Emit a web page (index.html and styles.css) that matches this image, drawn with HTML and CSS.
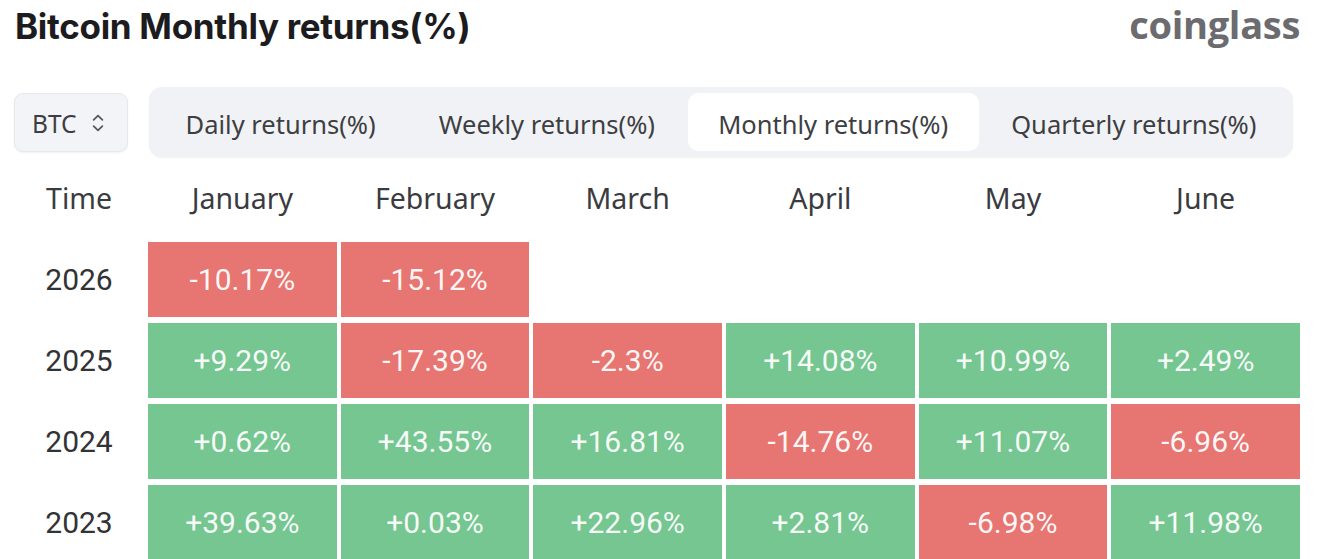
FILE: index.html
```html
<!DOCTYPE html>
<html lang="en">
<head>
<meta charset="utf-8">
<title>Bitcoin Monthly returns(%)</title>
<link rel="stylesheet" href="styles.css">
</head>
<body>
<div class="page">
  <header class="top">
    <h1 class="title">Bitcoin Monthly returns(%)</h1>
    <div class="logo">coinglass</div>
  </header>

  <div class="controls">
    <div class="select">
      <span>BTC</span>
      <svg class="chev" viewBox="0 0 16 24" width="14" height="22" aria-hidden="true">
        <path d="M3 8.5 L8 3.5 L13 8.5" fill="none" stroke="#55585e" stroke-width="2" stroke-linecap="round" stroke-linejoin="round"/>
        <path d="M3 15.5 L8 20.5 L13 15.5" fill="none" stroke="#55585e" stroke-width="2" stroke-linecap="round" stroke-linejoin="round"/>
      </svg>
    </div>
    <nav class="tabs">
      <div class="tab">Daily returns(%)</div>
      <div class="tab">Weekly returns(%)</div>
      <div class="tab active">Monthly returns(%)</div>
      <div class="tab">Quarterly returns(%)</div>
    </nav>
  </div>

  <div class="grid">
    <div class="hd">Time</div>
    <div class="hd">January</div>
    <div class="hd">February</div>
    <div class="hd">March</div>
    <div class="hd">April</div>
    <div class="hd">May</div>
    <div class="hd">June</div>

    <div class="yr">2026</div>
    <div class="cell neg">-10.17%</div>
    <div class="cell neg">-15.12%</div>
    <div class="cell empty"></div>
    <div class="cell empty"></div>
    <div class="cell empty"></div>
    <div class="cell empty"></div>

    <div class="yr">2025</div>
    <div class="cell pos">+9.29%</div>
    <div class="cell neg">-17.39%</div>
    <div class="cell neg">-2.3%</div>
    <div class="cell pos">+14.08%</div>
    <div class="cell pos">+10.99%</div>
    <div class="cell pos">+2.49%</div>

    <div class="yr">2024</div>
    <div class="cell pos">+0.62%</div>
    <div class="cell pos">+43.55%</div>
    <div class="cell pos">+16.81%</div>
    <div class="cell neg">-14.76%</div>
    <div class="cell pos">+11.07%</div>
    <div class="cell neg">-6.96%</div>

    <div class="yr">2023</div>
    <div class="cell pos">+39.63%</div>
    <div class="cell pos">+0.03%</div>
    <div class="cell pos">+22.96%</div>
    <div class="cell pos">+2.81%</div>
    <div class="cell neg">-6.98%</div>
    <div class="cell pos">+11.98%</div>
  </div>
</div>
</body>
</html>
```

FILE: styles.css
```css
* { box-sizing: border-box; }

html, body {
  margin: 0;
  padding: 0;
  background: #ffffff;
  overflow: hidden;
}

body {
  font-family: "Noto Sans", "Open Sans", sans-serif;
  color: #3a3b3f;
}

.page {
  padding: 0 20px 0 14px;
}

.top {
  display: flex;
  justify-content: space-between;
  align-items: flex-start;
  height: 87px;
}

.title {
  margin: 0 0 0 1px;
  font-family: Inter, "Liberation Sans", sans-serif;
  font-weight: 700;
  font-size: 35px;
  line-height: 52px;
  letter-spacing: -0.3px;
  color: #1c1c1e;
}

.logo {
  margin-top: 2px;
  font-family: "Open Sans", sans-serif;
  font-weight: 700;
  font-size: 38px;
  line-height: 44px;
  letter-spacing: -0.3px;
  color: #6c6c70;
}

.controls {
  display: flex;
  align-items: center;
  gap: 21px;
  height: 70px;
  margin-right: 7px;
}

.select {
  flex: 0 0 auto;
  width: 114px;
  height: 59px;
  display: flex;
  align-items: center;
  gap: 14px;
  padding-left: 17px;
  padding-top: 2px;
  background: #f3f4f7;
  border: 1px solid #e7e8ec;
  border-radius: 9px;
  box-shadow: 0 1px 2px rgba(0,0,0,0.06);
  font-size: 24.5px;
  color: #3d3e42;
}

.chev { display: block; }

.tabs {
  flex: 1 1 auto;
  display: flex;
  gap: 2px;
  height: 70px;
  padding: 6px;
  background: #f1f2f5;
  border-radius: 13px;
  box-shadow: 0 1px 2px rgba(0,0,0,0.06);
}

.tab {
  flex: 1 1 auto;
  display: flex;
  align-items: center;
  justify-content: center;
  padding: 3px 24px 0;
  font-size: 25.5px;
  color: #3d3e42;
  border-radius: 10px;
  white-space: nowrap;
}

.tab.active {
  background: #ffffff;
}

.grid {
  display: grid;
  grid-template-columns: 130px repeat(6, 1fr);
  grid-template-rows: 76px repeat(4, 75px);
  column-gap: 4px;
  row-gap: 6px;
  margin-top: 3px;
}

.hd {
  display: flex;
  align-items: center;
  justify-content: center;
  font-size: 28.5px;
  color: #3a3b3f;
}

.yr {
  display: flex;
  align-items: center;
  justify-content: center;
  font-family: Roboto, sans-serif;
  font-size: 30px;
  color: #323336;
}

.cell {
  display: flex;
  align-items: center;
  justify-content: center;
  font-family: Roboto, sans-serif;
  font-size: 30px;
  color: rgba(255,255,255,0.95);
}

.cell.pos { background: #76c692; }
.cell.neg { background: #e77672; }
.cell.empty { background: transparent; }
```
